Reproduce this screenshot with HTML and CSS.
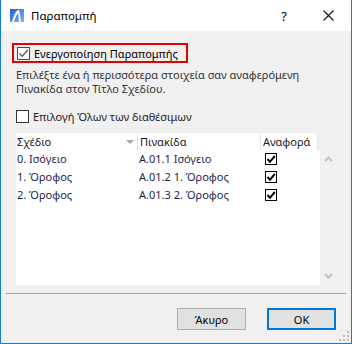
FILE: index.html
```html
<html>
	<head>
		<link rel="stylesheet" href="styles.css">
	</head>
	<body>
		<div class="window">
			<div class="titlebar">
				<svg class="app_icon" width="14" height="13" viewBox="0 0 14 13">
					<defs>
						<linearGradient id="ac" x1="0" y1="0" x2="1" y2="1">
							<stop offset="0" stop-color="#1e5fd8"/>
							<stop offset="1" stop-color="#7fb6f5"/>
						</linearGradient>
					</defs>
					<rect width="14" height="13" fill="url(#ac)"/>
					<path d="M2 13 C4 6 6 1 9 1 C10 4 10.5 9 11 13 L9 13 C8.6 9 8.4 6 8 4 C6.5 6 5 9 4 13 Z" fill="#fff"/>
				</svg>
				<span class="title">Παραπομπή</span>
				<span class="help">?</span>
				<svg class="close" width="11" height="11" viewBox="0 0 11 11">
					<path d="M0.5 0.5 L10.5 10.5 M10.5 0.5 L0.5 10.5" stroke="#111" stroke-width="1.1"/>
				</svg>
			</div>

			<div class="content">
				<div class="enable">
					<span class="check check_gray">
						<svg width="11" height="11" viewBox="0 0 11 11"><path d="M1.5 5.5 L4.2 8.3 L9.8 2" fill="none" stroke="#5a5a5a" stroke-width="1.4"/></svg>
					</span>
					<span>Ενεργοποίηση Παραπομπής</span>
				</div>

				<p class="hint">Επιλέξτε ένα ή περισσότερα στοιχεία σαν αναφερόμενη<br>Πινακίδα στον Τίτλο Σχεδίου.</p>

				<div class="select_all">
					<span class="check"></span>
					<span>Επιλογή Όλων των διαθέσιμων</span>
				</div>

				<div class="list">
					<div class="table">
						<div class="head">
							<div class="cell">Σχέδιο<span class="sort"></span></div>
							<div class="cell">Πινακίδα</div>
							<div class="cell">Αναφορά</div>
						</div>
						<div class="row">
							<div class="cell">0. Ισόγειο</div>
							<div class="cell">A.01.1 Ισόγειο</div>
							<div class="cell"><span class="box"><svg width="10" height="10" viewBox="0 0 10 10"><path d="M1.5 5 L4 7.8 L8.8 2" fill="none" stroke="#000" stroke-width="2"/></svg></span></div>
						</div>
						<div class="row">
							<div class="cell">1. Όροφος</div>
							<div class="cell">A.01.2 1. Όροφος</div>
							<div class="cell"><span class="box"><svg width="10" height="10" viewBox="0 0 10 10"><path d="M1.5 5 L4 7.8 L8.8 2" fill="none" stroke="#000" stroke-width="2"/></svg></span></div>
						</div>
						<div class="row">
							<div class="cell">2. Όροφος</div>
							<div class="cell">A.01.3 2. Όροφος</div>
							<div class="cell"><span class="box"><svg width="10" height="10" viewBox="0 0 10 10"><path d="M1.5 5 L4 7.8 L8.8 2" fill="none" stroke="#000" stroke-width="2"/></svg></span></div>
						</div>
					</div>
					<div class="scrollbar">
						<svg width="9" height="6" viewBox="0 0 9 6"><path d="M1 5 L4.5 1.5 L8 5" fill="none" stroke="#c2c2c2" stroke-width="2"/></svg>
						<svg width="9" height="6" viewBox="0 0 9 6"><path d="M1 1 L4.5 4.5 L8 1" fill="none" stroke="#c2c2c2" stroke-width="2"/></svg>
					</div>
				</div>
			</div>

			<div class="divider"></div>

			<div class="buttons">
				<button>Άκυρο</button>
				<button class="default">OK</button>
			</div>

			<svg class="grip" width="10" height="10" viewBox="0 0 10 10">
				<rect x="8" y="0" width="2" height="2" fill="#bdbdbd"/>
				<rect x="4" y="4" width="2" height="2" fill="#bdbdbd"/>
				<rect x="8" y="4" width="2" height="2" fill="#bdbdbd"/>
				<rect x="0" y="8" width="2" height="2" fill="#bdbdbd"/>
				<rect x="4" y="8" width="2" height="2" fill="#bdbdbd"/>
				<rect x="8" y="8" width="2" height="2" fill="#bdbdbd"/>
			</svg>
		</div>
	</body>
</html>
```

FILE: styles.css
```css
* {
	margin: 0;
	padding: 0;
	box-sizing: border-box;
}

body {
	font-family: "Noto Sans", "DejaVu Sans", sans-serif;
	font-size: 11px;
	color: #1a1a1a;
	background: #fff;
}

.window {
	position: relative;
	width: 352px;
	height: 344px;
	background: #f0f0f0;
	border: 1px solid #1a7ad4;
	border-top: none;
}

.titlebar {
	height: 31px;
	background: #fff;
	display: flex;
	align-items: center;
	padding-left: 9px;
}

.app_icon {
	margin-right: 7px;
}

.title {
	flex: 1;
	font-size: 11.5px;
	color: #000;
}

.help {
	font-size: 13px;
	color: #000;
	margin-right: 36px;
}

.close {
	margin-right: 17px;
}

.content {
	padding: 12px 0 0 15px;
}

.enable {
	display: flex;
	align-items: center;
	width: 176px;
	height: 20px;
	margin-left: -4px;
	padding-left: 3px;
	border: 2px solid #e60000;
	color: #000;
	white-space: nowrap;
}

.check {
	flex: none;
	width: 13px;
	height: 13px;
	border: 1px solid #333;
	background: #fff;
	margin-right: 4px;
	display: flex;
	align-items: center;
	justify-content: center;
}

.check_gray {
	border-color: #4a4a4a;
}

.hint {
	margin-top: 5px;
	line-height: 14px;
	color: #333;
	white-space: nowrap;
}

.select_all {
	display: flex;
	align-items: center;
	margin-top: 13px;
	color: #222;
}

.list {
	display: flex;
	margin-top: 9px;
	width: 320px;
	height: 152px;
}

.table {
	width: 304px;
	background: #fff;
}

.head {
	display: grid;
	grid-template-columns: 122px 123px 57px;
	height: 17px;
	background: #f0f0f0;
}

.head .cell {
	background: #fff;
	border-right: 1px solid #e5e5e5;
	padding-left: 1px;
	line-height: 17px;
	display: flex;
	align-items: center;
	color: #1a1a1a;
}

.head .cell:nth-child(2),
.head .cell:nth-child(3) {
	padding-left: 2px;
}

.sort {
	margin-left: auto;
	margin-right: 3px;
	border-left: 4px solid transparent;
	border-right: 4px solid transparent;
	border-top: 4px solid #a6a6a6;
}

.row {
	display: grid;
	grid-template-columns: 122px 123px 57px;
	height: 18px;
	line-height: 18px;
	color: #1e1e4e;
}

.row .cell {
	padding-left: 1px;
}

.row .cell:nth-child(3) {
	padding-left: 4px;
	display: flex;
	align-items: center;
}

.box {
	width: 12px;
	height: 12px;
	border: 1px solid #000;
	display: flex;
	align-items: center;
	justify-content: center;
}

.scrollbar {
	width: 16px;
	margin-top: 17px;
	display: flex;
	flex-direction: column;
	justify-content: space-between;
	align-items: center;
	padding: 6px 0 6px 1px;
}

.divider {
	height: 1px;
	background: #a0a0a0;
	margin: 8px 5px 0 5px;
}

.buttons {
	display: flex;
	justify-content: flex-end;
	gap: 21px;
	padding: 14px 15px 0 0;
}

.buttons button {
	width: 69px;
	height: 22px;
	background: #e1e1e1;
	border: 1px solid #adadad;
	font-family: "Noto Sans", "DejaVu Sans", sans-serif;
	font-size: 11px;
	color: #000;
}

.buttons .default {
	border: 2px solid #0078d7;
}

.grip {
	position: absolute;
	right: 2px;
	bottom: 2px;
}
```
